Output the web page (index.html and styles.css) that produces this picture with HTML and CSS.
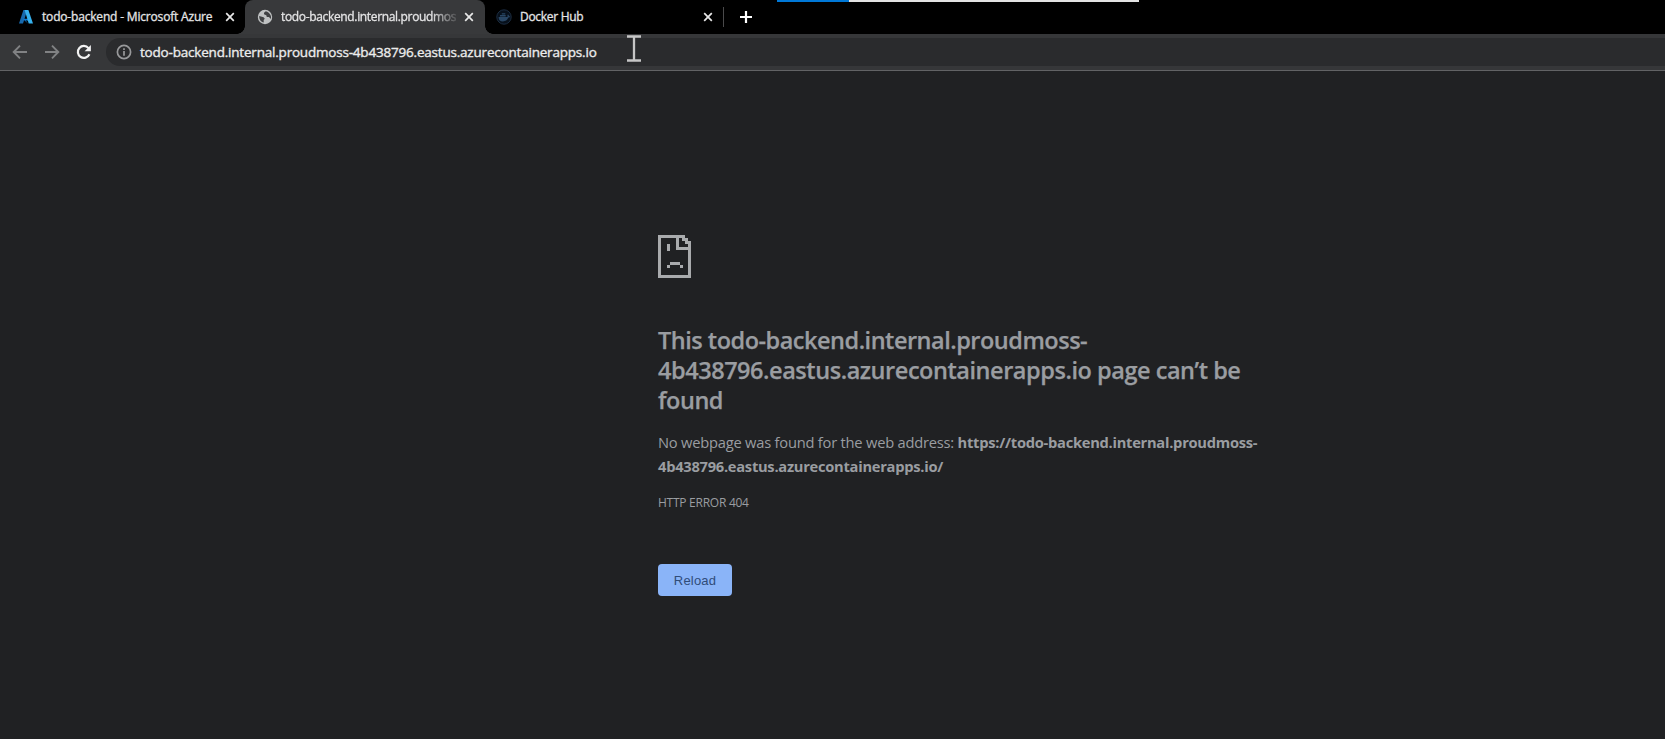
FILE: index.html
```html
<!DOCTYPE html>
<html lang="en">
<head>
<meta charset="utf-8">
<title>todo-backend.internal.proudmoss-4b438796.eastus.azurecontainerapps.io</title>
<link rel="stylesheet" href="styles.css">
</head>
<body>
<header class="tabs">
  <div class="tab tab-first">
    <svg class="favicon" viewBox="0 0 16 16"><path d="M5.400 1h4L5 14.500H1z" fill="#1769ad"/><path d="M4.500 9.800h7l-1.200 2-2.800-.5L10 14.500z" fill="#0b79d0"/><path d="M6.600 1h3.800l4.600 13.600h-4.300z" fill="#36b1ee"/></svg>
    <span class="tab-title title-azure">todo-backend - Microsoft Azure</span>
    <svg class="close" viewBox="0 0 10 10"><path d="M1.200 1.200l7.600 7.600M8.800 1.200L1.200 8.800"/></svg>
  </div>
  <div class="tab tab-active">
    <svg class="favicon" viewBox="0 0 16 16"><circle cx="8" cy="8" r="7.200" fill="#bfc1c2"/><path d="M2.200 7.100l4.400 1.100 1.200 1.500-1.100 1.300v2.600C4.200 13 2 10.700 2.200 7.100zM8.800 2.200L7 3.800v1.400l2.300 1 .5 1.700 2.100.2 2 1.900c.8-3.300-1-6.500-5.100-7.800z" fill="#414244"/></svg>
    <span class="tab-title title-error">todo-backend.internal.proudmos</span>
    <svg class="close" viewBox="0 0 10 10"><path d="M1.200 1.200l7.600 7.600M8.800 1.200L1.200 8.800"/></svg>
  </div>
  <div class="tab tab-docker">
    <svg class="favicon" viewBox="0 0 16 16"><circle cx="8" cy="8" r="7.200" fill="#07101b" stroke="#1b2c40"/><path d="M2.600 8h8.800c.4-1 .3-1.500-.1-2.100l.8-.4c.7.5.9 1.100.9 1.700h1.300c-.5 1.100-1.100 1.300-2 1.400-1 2.700-2.800 3.800-5.400 3.800-2.700 0-4.400-1.300-4.300-4.400zM4 6h5.700v1.500H4zM5.800 4.200h3.500v1.300H5.800z" fill="#294664"/></svg>
    <span class="tab-title title-docker">Docker Hub</span>
    <svg class="close" viewBox="0 0 10 10"><path d="M1.200 1.200l7.600 7.600M8.800 1.200L1.200 8.800"/></svg>
  </div>
  <i class="divider"></i>
  <svg class="plus" viewBox="0 0 14 14"><path d="M7 1v12M1 7h12"/></svg>
  <div class="progress"><i></i></div>
</header>
<nav class="toolbar">
  <svg class="nav-icon" viewBox="0 0 16 16"><path d="M15 8H2M8 1.700L1.700 8 8 14.300"/></svg>
  <svg class="nav-icon" viewBox="0 0 16 16"><path d="M1 8h13M8 1.700L14.300 8 8 14.300"/></svg>
  <svg class="nav-icon reload" viewBox="0 0 16 16"><path d="M13.400 10.300a6 6 0 1 1-.9-6.200"/><path class="tip" d="M14.900 1v6.300H8.600z"/></svg>
  <div class="omnibox">
    <svg class="info" viewBox="0 0 16 16"><circle cx="8" cy="8" r="6.600"/><path d="M8 7v4.700M8 4.200v1.700"/></svg>
    <span class="url">todo-backend.internal.proudmoss-4b438796.eastus.azurecontainerapps.io</span>
  </div>
  <svg class="cursor" viewBox="0 0 16 27"><path d="M1 1.500h14M1 25.500h14M8 1.500v24"/></svg>
</nav>
<main class="page">
  <svg class="sad" viewBox="0 0 33 43" shape-rendering="crispEdges"><path d="M0 0h27v3h3v3h3v37H0zM3 3v37h27V15H18V3zM21 3v9h9V9h-3V6h-3V3zM9 9h3v7H9zM12 27h10v3H12zM9 30h3v3H9zM22 30h3v3h-3z" fill="#a9abad" fill-rule="evenodd"/></svg>
  <h1><span class="h-one">This todo-backend.internal.proudmoss-</span><br><span class="h-two">4b438796.eastus.azurecontainerapps.io page can’t be</span><br><span class="h-three">found</span></h1>
  <p><span class="p-one">No webpage was found for the web address: </span><b class="p-two">https://todo-backend.internal.proudmoss-</b><br><b class="p-three">4b438796.eastus.azurecontainerapps.io/</b></p>
  <div class="code">HTTP ERROR 404</div>
  <button>Reload</button>
</main>
</body>
</html>
```
FILE: styles.css
```css
* { box-sizing: border-box; }
body { margin: 0; height: 739px; overflow: hidden; background: #202123; color: #9a9da1; font-family: "Open Sans", "Noto Sans", sans-serif; }
svg { display: block; flex: none; }
.tabs { position: relative; display: flex; align-items: center; height: 34px; background: #000; }
.tab { display: flex; align-items: center; height: 34px; flex: none; color: #e4e4e5; font-size: 12px; }
.tab-first { width: 245px; padding-left: 18px; }
.tab-active { position: relative; width: 240px; padding-left: 12px; background: #38393b; border-radius: 8px 8px 0 0; }
.tab-active::before, .tab-active::after { content: ""; position: absolute; bottom: 0; width: 8px; height: 8px; }
.tab-active::before { left: -8px; background: radial-gradient(circle at 0 0, #000 7.5px, #38393b 8px); }
.tab-active::after { right: -8px; background: radial-gradient(circle at 100% 0, #000 7.5px, #38393b 8px); }
.tab-docker { width: 238px; padding-left: 11px; }
.favicon { width: 16px; height: 16px; }
.tab-title { margin-left: 8px; width: 176px; white-space: nowrap; line-height: 20px; -webkit-text-stroke: .3px; }
.title-azure { letter-spacing: -.18px; }
.title-docker { letter-spacing: -.3px; }
.title-error { letter-spacing: -.34px; -webkit-mask-image: linear-gradient(90deg, #000 150px, transparent 180px); mask-image: linear-gradient(90deg, #000 150px, transparent 180px); }
.close { width: 10px; height: 10px; margin-left: 7px; fill: none; stroke: #e8e8e8; stroke-width: 1.7; }
.divider { width: 1px; height: 20px; background: #4a4a4b; }
.plus { width: 14px; height: 14px; margin-left: 15px; fill: none; stroke: #fff; stroke-width: 2.2; }
.progress { position: absolute; top: 0; left: 777px; width: 362px; height: 2px; background: #e3e3e3; }
.progress i { display: block; width: 72px; height: 2px; background: #0078d7; }
.toolbar { position: relative; display: flex; align-items: center; height: 37px; padding-left: 12px; gap: 16px; background: #363739; border-bottom: 1px solid #626365; }
.nav-icon { width: 16px; height: 16px; fill: none; stroke: #818284; stroke-width: 1.9; }
.reload { stroke: #f2f2f2; stroke-width: 2.2; }
.reload .tip { fill: #f2f2f2; stroke: none; }
.omnibox { display: flex; align-items: center; flex: 1; height: 28px; margin-left: -2px; padding-left: 10px; border-radius: 14px 0 0 14px; background: #2a2b2d; }
.info { width: 16px; height: 16px; fill: none; stroke: #98999b; stroke-width: 1.7; }
.url { margin-left: 8px; color: #ececec; font-size: 13.5px; letter-spacing: -.2px; white-space: nowrap; -webkit-text-stroke: .35px; }
.cursor { position: absolute; left: 626px; top: 1px; width: 16px; height: 27px; fill: none; stroke: #c6c6c6; stroke-width: 2.3; }
.page { padding: 164px 0 0 658px; white-space: nowrap; }
.sad { width: 33px; height: 43px; }
h1 { margin: 47px 0 0; font-size: 23.5px; line-height: 30px; font-weight: 600; -webkit-text-stroke: .25px; }
.h-one { letter-spacing: -.49px; }
.h-two { letter-spacing: -.45px; }
.h-three { letter-spacing: -.46px; }
p { margin: 15px 0 0; font-size: 14.7px; line-height: 24px; }
.p-one { letter-spacing: -.22px; }
.p-two, .p-three { letter-spacing: -.27px; }
.code { margin-top: 16px; font-size: 12px; line-height: 18px; letter-spacing: -.26px; }
button { display: block; width: 74px; height: 32px; margin: 52px 0 0; padding: 0; border: 0; border-radius: 4px; background: #8ab4f8; color: #304c78; font: 13px "Liberation Sans", Arial, sans-serif; letter-spacing: .2px; }
```
